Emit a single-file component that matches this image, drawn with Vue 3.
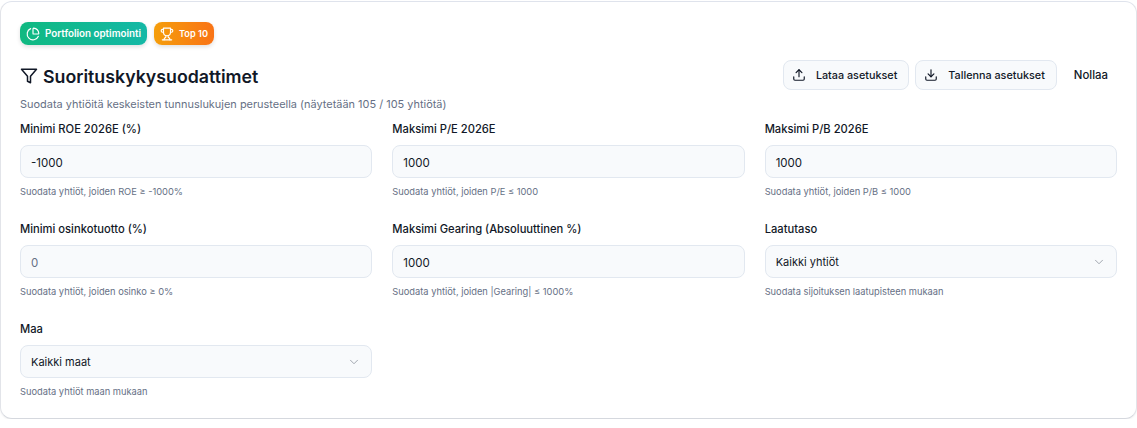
<template>
  <div class="card">
    <div class="badges">
      <span class="badge badge-green">
        <svg width="14" height="14" viewBox="0 0 24 24" fill="none" stroke="currentColor" stroke-width="2" stroke-linecap="round" stroke-linejoin="round">
          <path d="M21 12c.552 0 1.005-.449.95-.998a10 10 0 0 0-8.953-8.951c-.55-.055-.998.398-.998.95v8a1 1 0 0 0 1 1z" />
          <path d="M21.21 15.89A10 10 0 1 1 8 2.83" />
        </svg>
        Portfolion optimointi
      </span>
      <span class="badge badge-orange">
        <svg width="14" height="14" viewBox="0 0 24 24" fill="none" stroke="currentColor" stroke-width="2" stroke-linecap="round" stroke-linejoin="round">
          <path d="M6 9H4.5a2.5 2.5 0 0 1 0-5H6" />
          <path d="M18 9h1.5a2.5 2.5 0 0 0 0-5H18" />
          <path d="M4 22h16" />
          <path d="M10 14.66V17c0 .55-.47.98-.97 1.21C7.85 18.75 7 20.24 7 22" />
          <path d="M14 14.66V17c0 .55.47.98.97 1.21C16.15 18.75 17 20.24 17 22" />
          <path d="M18 2H6v7a6 6 0 0 0 12 0V2Z" />
        </svg>
        Top 10
      </span>
    </div>

    <div class="header">
      <h2 class="title">
        <svg width="18" height="18" viewBox="0 0 24 24" fill="none" stroke="currentColor" stroke-width="2" stroke-linecap="round" stroke-linejoin="round">
          <polygon points="22 3 2 3 10 12.46 10 19 14 21 14 12.46 22 3" />
        </svg>
        Suorituskykysuodattimet
      </h2>
      <div class="actions">
        <button type="button" class="btn btn-outline">
          <svg width="14" height="14" viewBox="0 0 24 24" fill="none" stroke="currentColor" stroke-width="2" stroke-linecap="round" stroke-linejoin="round">
            <path d="M21 15v4a2 2 0 0 1-2 2H5a2 2 0 0 1-2-2v-4" />
            <polyline points="17 8 12 3 7 8" />
            <line x1="12" y1="3" x2="12" y2="15" />
          </svg>
          Lataa asetukset
        </button>
        <button type="button" class="btn btn-outline">
          <svg width="14" height="14" viewBox="0 0 24 24" fill="none" stroke="currentColor" stroke-width="2" stroke-linecap="round" stroke-linejoin="round">
            <path d="M21 15v4a2 2 0 0 1-2 2H5a2 2 0 0 1-2-2v-4" />
            <polyline points="7 10 12 15 17 10" />
            <line x1="12" y1="15" x2="12" y2="3" />
          </svg>
          Tallenna asetukset
        </button>
        <button type="button" class="btn btn-ghost">Nollaa</button>
      </div>
    </div>

    <p class="desc">Suodata yhtiöitä keskeisten tunnuslukujen perusteella (näytetään 105 / 105 yhtiötä)</p>

    <div class="grid">
      <div v-for="f in filters" :key="f.label" class="field">
        <label class="label">{{ f.label }}</label>
        <div v-if="f.select" class="control control-select">
          <span>{{ f.value }}</span>
          <svg width="14" height="14" viewBox="0 0 24 24" fill="none" stroke="#6b7280" stroke-width="1.6" stroke-linecap="round" stroke-linejoin="round" opacity="0.65">
            <path d="m6 9 6 6 6-6" />
          </svg>
        </div>
        <div v-else :class="['control', 'control-input', { placeholder: f.placeholder }]">{{ f.value }}</div>
        <p class="hint">{{ f.hint }}</p>
      </div>
    </div>
  </div>
</template>

<script setup>
// Suodattimien kentät
const filters = [
  { label: 'Minimi ROE 2026E (%)', value: '-1000', hint: 'Suodata yhtiöt, joiden ROE ≥ -1000%' },
  { label: 'Maksimi P/E 2026E', value: '1000', hint: 'Suodata yhtiöt, joiden P/E ≤ 1000' },
  { label: 'Maksimi P/B 2026E', value: '1000', hint: 'Suodata yhtiöt, joiden P/B ≤ 1000' },
  { label: 'Minimi osinkotuotto (%)', value: '0', placeholder: true, hint: 'Suodata yhtiöt, joiden osinko ≥ 0%' },
  { label: 'Maksimi Gearing (Absoluuttinen %)', value: '1000', hint: 'Suodata yhtiöt, joiden |Gearing| ≤ 1000%' },
  { label: 'Laatutaso', value: 'Kaikki yhtiöt', select: true, hint: 'Suodata sijoituksen laatupisteen mukaan' },
  { label: 'Maa', value: 'Kaikki maat', select: true, hint: 'Suodata yhtiöt maan mukaan' },
]
</script>

<style>
html,
body {
  background: #fff;
}
</style>

<style scoped>
.card {
  box-sizing: border-box;
  width: 1137px;
  height: 418px;
  margin-top: 1px;
  padding: 20px 19px 0;
  background: #fff;
  border-top: 1px solid #dfe3ec;
  border-bottom: 1px solid #d5d8de;
  border-left: 1px solid #e2e4e9;
  border-right: 1px solid #e2e4e9;
  border-radius: 12px;
  box-shadow: 0 1px 2px rgba(0, 0, 0, 0.06);
  font-family: Inter, "Noto Sans", sans-serif;
  color: #0f172a;
}

.badges {
  display: flex;
  gap: 7px;
}

.badge {
  display: inline-flex;
  align-items: center;
  gap: 5px;
  height: 23px;
  padding: 0 6px;
  border-radius: 8px;
  color: #fff;
  font-size: 9.8px;
  font-weight: 600;
  box-shadow: 0 2px 4px rgba(0, 0, 0, 0.12);
}

.badge-green {
  background: linear-gradient(90deg, #10b981, #14b8a6);
}

.badge-orange {
  font-size: 9.2px;
  background: linear-gradient(90deg, #f59e0b, #f97316);
}

.header {
  display: flex;
  justify-content: space-between;
  align-items: center;
  margin-top: 15px;
  height: 30px;
}

.title {
  display: flex;
  align-items: center;
  gap: 5px;
  margin: 0;
  padding-top: 2px;
  font-size: 17.75px;
  font-weight: 600;
  color: #111827;
}

.actions {
  display: flex;
  align-items: center;
  gap: 6px;
}

.btn {
  display: inline-flex;
  align-items: center;
  height: 30px;
  font-family: inherit;
  font-size: 10.8px;
  font-weight: 500;
  color: #111827;
  background: none;
  border: none;
  border-radius: 8px;
}

.btn-outline {
  gap: 10px;
  padding: 0 11px 0 8px;
  background: #f8fafc;
  border: 1px solid #e2e8f0;
}

.btn-ghost {
  margin-left: 2px;
  padding: 0 9px;
  font-size: 11.4px;
}

.desc {
  margin: 6px 0 0;
  font-size: 10.95px;
  line-height: 16px;
  color: #667085;
}

.grid {
  display: grid;
  grid-template-columns: repeat(3, 1fr);
  column-gap: 20px;
  row-gap: 20px;
  margin-top: 8px;
}

.field {
  display: flex;
  flex-direction: column;
  height: 80px;
}

.label {
  padding-top: 1px;
  font-size: 11.2px;
  font-weight: 500;
  line-height: 16px;
  color: #111827;
}

.control {
  box-sizing: border-box;
  display: flex;
  justify-content: space-between;
  align-items: center;
  height: 33px;
  margin-top: 8px;
  padding: 0 10px;
  background: #f8fafc;
  border: 1px solid #e2e8f0;
  border-radius: 8px;
  font-size: 11.5px;
  color: #111827;
}

.control-input {
  padding-top: 2px;
}

.control-select {
  font-size: 11px;
}

.placeholder {
  color: #667085;
}

.hint {
  margin: 8px 0 0;
  font-size: 9.3px;
  line-height: 12px;
  color: #667085;
}
</style>
